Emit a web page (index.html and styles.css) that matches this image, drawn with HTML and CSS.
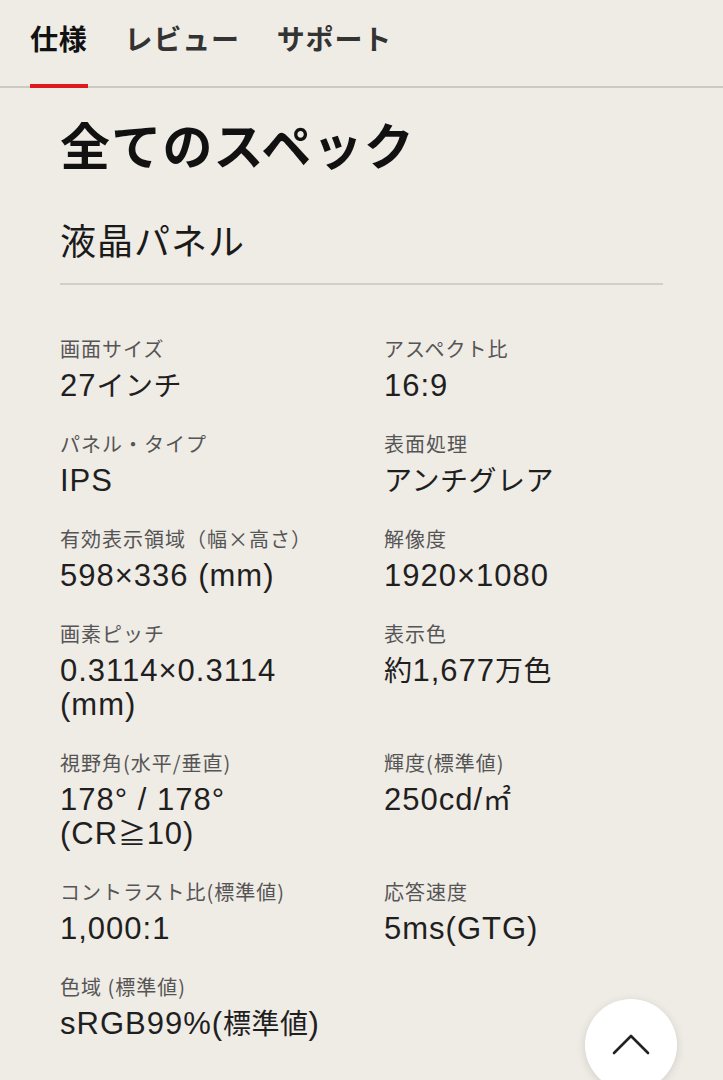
FILE: index.html
```html
<!DOCTYPE html>
<html lang="ja">
<head>
<meta charset="utf-8">
<title>仕様</title>
<link rel="stylesheet" href="styles.css">
</head>
<body>
<nav class="tabs">
  <a class="tab active">仕様</a>
  <a class="tab">レビュー</a>
  <a class="tab">サポート</a>
</nav>
<main class="content">
  <h1 class="title">全てのスペック</h1>
  <h2 class="section">液晶パネル</h2>
  <dl class="specs">
    <div class="spec"><dt>画面サイズ</dt><dd>27<span class="ja">インチ</span></dd></div>
    <div class="spec"><dt>アスペクト比</dt><dd>16:9</dd></div>
    <div class="spec"><dt>パネル・タイプ</dt><dd>IPS</dd></div>
    <div class="spec"><dt>表面処理</dt><dd><span class="ja">アンチグレア</span></dd></div>
    <div class="spec"><dt>有効表示領域（幅×高さ）</dt><dd>598×336 (mm)</dd></div>
    <div class="spec"><dt>解像度</dt><dd>1920×1080</dd></div>
    <div class="spec"><dt>画素ピッチ</dt><dd>0.3114×0.3114 (mm)</dd></div>
    <div class="spec"><dt>表示色</dt><dd><span class="ja">約</span>1,677<span class="ja">万色</span></dd></div>
    <div class="spec"><dt>視野角(水平/垂直)</dt><dd>178° / 178° (CR<span class="ja">≧</span>10)</dd></div>
    <div class="spec"><dt>輝度(標準値)</dt><dd>250cd/<span class="ja">㎡</span></dd></div>
    <div class="spec"><dt>コントラスト比(標準値)</dt><dd>1,000:1</dd></div>
    <div class="spec"><dt>応答速度</dt><dd>5ms(GTG)</dd></div>
    <div class="spec"><dt>色域 (標準値)</dt><dd>sRGB99%(<span class="ja">標準値</span>)</dd></div>
  </dl>
</main>
<button class="to-top" aria-label="ページトップへ">
  <svg width="40" height="24" viewBox="0 0 40 24"><path d="M3 21 L20 4 L37 21" fill="none" stroke="#222" stroke-width="2.6" stroke-linecap="round" stroke-linejoin="round"/></svg>
</button>
</body>
</html>
```
FILE: styles.css
```css
html, body {
  margin: 0;
  padding: 0;
}
body {
  background: #efebe5;
  font-family: "Liberation Sans", "Noto Sans CJK JP", sans-serif;
  color: #1a1a1a;
  height: 1080px;
  overflow: hidden;
}
.tabs {
  display: flex;
  gap: 37px;
  padding: 0 0 0 30px;
  height: 86px;
  border-bottom: 2px solid #cdc8c2;
  font-family: "Noto Sans CJK JP", sans-serif;
}
.tab {
  position: relative;
  font-size: 28px;
  font-weight: 700;
  color: #333;
  line-height: 76px;
  letter-spacing: 0.8px;
}
.tab.active {
  color: #111;
}
.tab.active::after {
  content: "";
  position: absolute;
  left: 0;
  right: 0;
  bottom: -2px;
  height: 4px;
  background: #e0191e;
}
.content {
  padding: 25px 60px 0 60px;
}
.title {
  margin: 0;
  font-family: "Noto Sans CJK JP", sans-serif;
  font-size: 50px;
  line-height: 60px;
  font-weight: 700;
  letter-spacing: 1.2px;
  color: #111;
}
.section {
  margin: 42px 0 0 0;
  padding-bottom: 20px;
  font-family: "Noto Sans CJK JP", sans-serif;
  font-size: 36px;
  line-height: 48px;
  font-weight: 400;
  letter-spacing: 1px;
  color: #1a1a1a;
  border-bottom: 2px solid #d3cec8;
}
.specs {
  margin: 50px 0 0 0;
  display: grid;
  grid-template-columns: 280px 1fr;
  column-gap: 44px;
  row-gap: 27px;
}
.spec dt {
  font-family: "Noto Sans CJK JP", sans-serif;
  font-size: 20px;
  line-height: 28px;
  letter-spacing: 1px;
  color: #555;
}
.spec dd {
  margin: 6px 0 0 0;
  font-size: 31px;
  line-height: 34px;
  letter-spacing: 1px;
  color: #1f1f1f;
}
.spec dd .ja {
  font-family: "Noto Sans CJK JP", sans-serif;
  font-size: 28px;
  line-height: 28px;
  letter-spacing: 0.5px;
}
.to-top {
  position: fixed;
  left: 585px;
  top: 999px;
  width: 92px;
  height: 92px;
  border-radius: 50%;
  border: none;
  background: #fff;
  box-shadow: 0 2px 10px rgba(0,0,0,0.12);
  display: flex;
  align-items: flex-start;
  justify-content: center;
  padding: 33px 0 0 0;
}
```
